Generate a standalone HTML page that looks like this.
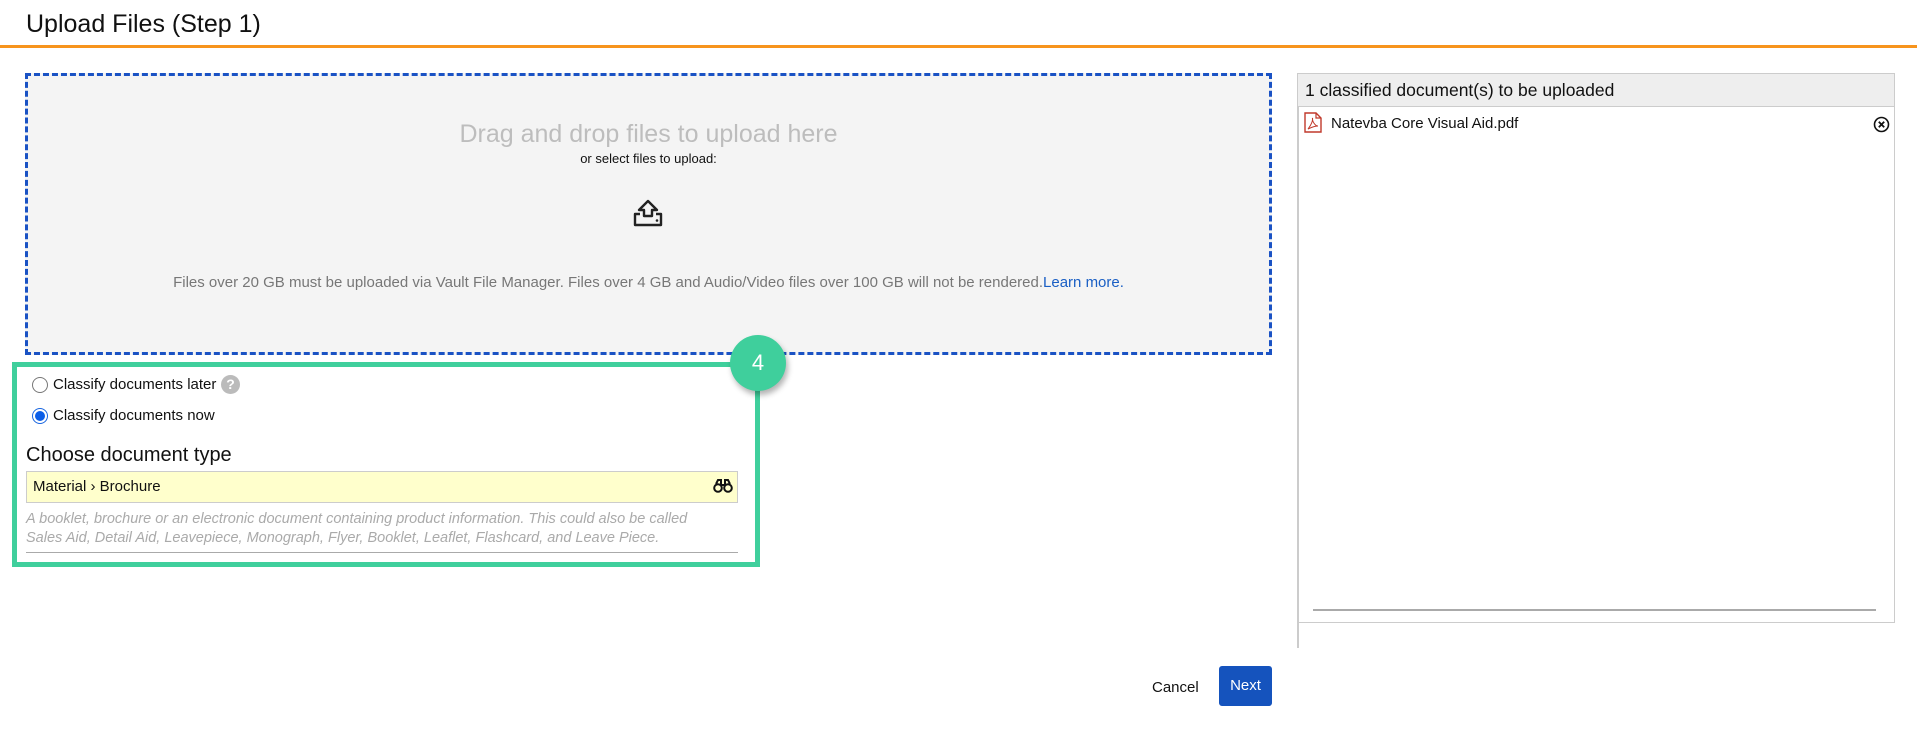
<!DOCTYPE html>
<html><head><meta charset="utf-8"><style>
*{box-sizing:border-box;margin:0;padding:0}
body{width:1917px;height:736px;background:#fff;font-family:"Liberation Sans",Arial,sans-serif;position:relative;overflow:hidden;color:#222}
.a{position:absolute;white-space:nowrap}
</style></head><body>
<div class="a" style="left:26px;top:10px;font-size:25px;color:#111">Upload Files (Step 1)</div>
<div class="a" style="left:0;top:45px;width:1917px;height:3px;background:#f7941d"></div>

<div class="a" style="left:25px;top:73px;width:1247px;height:282px;background:#f4f4f4;border:3px dashed #1a52c4"></div>
<div class="a" style="left:0;width:1297px;top:120px;text-align:center;font-size:25px;color:#bdbdbd">Drag and drop files to upload here</div>
<div class="a" style="left:0;width:1297px;top:151px;text-align:center;font-size:13px;color:#111">or select files to upload:</div>
<svg class="a" style="left:632px;top:199px" width="32" height="29" viewBox="0 0 32 29"><path d="M16 2 L7 11 H12 V17 H20 V11 H25 Z" fill="none" stroke="#222" stroke-width="2.4" stroke-linejoin="round"/><path d="M8 15 H3 V26 H29 V15 H24" fill="none" stroke="#222" stroke-width="2.4" stroke-linejoin="round"/><circle cx="25" cy="21.5" r="1.3" fill="#222"/></svg>
<div class="a" style="left:0;width:1297px;top:274px;text-align:center;font-size:15px;color:#777">Files over 20 GB must be uploaded via Vault File Manager. Files over 4 GB and Audio/Video files over 100 GB will not be rendered.<span style="color:#1a5fc4">Learn more.</span></div>

<div class="a" style="left:1297px;top:73px;width:598px;height:550px;border:1px solid #ccc;border-left:2px solid #ccc"></div>
<div class="a" style="left:1297px;top:623px;width:2px;height:25px;background:#ccc"></div>
<div class="a" style="left:1298px;top:74px;width:596px;height:33px;background:#eee;border-bottom:1px solid #ccc"></div>
<div class="a" style="left:1305px;top:80px;font-size:17.5px;color:#111">1 classified document(s) to be uploaded</div>
<svg class="a" style="left:1304px;top:112px" width="18" height="21" viewBox="0 0 18 21"><path d="M1 1 H12 L17 6 V20 H1 Z" fill="#fff" stroke="#c0392b" stroke-width="1.4"/><path d="M12 1 V6 H17" fill="none" stroke="#c0392b" stroke-width="1.2"/><path d="M4 17 C7 13 9 9 8.5 6 C8 9 11 14 14 14 C10 14 6 16 4 17Z" fill="none" stroke="#c0392b" stroke-width="1"/></svg>
<div class="a" style="left:1331px;top:115px;font-size:15px;color:#111">Natevba Core Visual Aid.pdf</div>
<svg class="a" style="left:1873px;top:116px" width="17" height="17" viewBox="0 0 17 17"><circle cx="8.5" cy="8.5" r="7" fill="none" stroke="#111" stroke-width="1.6"/><path d="M5.8 5.8 L11.2 11.2 M11.2 5.8 L5.8 11.2" stroke="#111" stroke-width="1.8"/></svg>
<div class="a" style="left:1313px;top:609px;width:563px;height:2px;background:#aaa"></div>

<div class="a" style="left:12px;top:362px;width:748px;height:205px;border:5px solid #3fcf9c"></div>
<div class="a" style="left:730px;top:335px;width:56px;height:56px;border-radius:50%;background:#3fcf9c;box-shadow:2px 4px 6px rgba(0,0,0,.3);color:#fff;font-size:22px;text-align:center;line-height:56px">4</div>
<div class="a" style="left:32px;top:377px;width:16px;height:16px;border-radius:50%;border:1px solid #777;background:#fff"></div>
<div class="a" style="left:53px;top:376px;font-size:15px;color:#111">Classify documents later</div>
<div class="a" style="left:221px;top:375px;width:19px;height:19px;border-radius:50%;background:#bbb;color:#fff;font-size:14px;font-weight:bold;text-align:center;line-height:19px">?</div>
<div class="a" style="left:32px;top:408px;width:16px;height:16px;border-radius:50%;border:1px solid #1a66e0;background:#fff"></div>
<div class="a" style="left:35px;top:411px;width:10px;height:10px;border-radius:50%;background:#0b5ee8"></div>
<div class="a" style="left:53px;top:407px;font-size:15px;color:#111">Classify documents now</div>
<div class="a" style="left:26px;top:444px;font-size:20px;color:#111">Choose document type</div>
<div class="a" style="left:26px;top:471px;width:712px;height:32px;background:#ffffcc;border:1px solid #ccc"></div>
<div class="a" style="left:33px;top:478px;font-size:15px;color:#111">Material › Brochure</div>
<svg class="a" style="left:713px;top:479px" width="20" height="14" viewBox="0 0 20 14"><circle cx="5" cy="9" r="3.8" fill="none" stroke="#111" stroke-width="2"/><circle cx="15" cy="9" r="3.8" fill="none" stroke="#111" stroke-width="2"/><path d="M3 5 L5 1 H8 V6 M17 5 L15 1 H12 V6 M8 6 H12" fill="none" stroke="#111" stroke-width="2"/></svg>
<div class="a" style="left:26px;top:510px;font-size:14.5px;font-style:italic;color:#aaa;line-height:19px;white-space:normal;width:690px">A booklet, brochure or an electronic document containing product information. This could also be called Sales Aid, Detail Aid, Leavepiece, Monograph, Flyer, Booklet, Leaflet, Flashcard, and Leave Piece.</div>
<div class="a" style="left:26px;top:552px;width:712px;height:1px;background:#aaa"></div>

<div class="a" style="left:1152px;top:679px;font-size:15px;color:#111">Cancel</div>
<div class="a" style="left:1219px;top:666px;width:53px;height:40px;background:#1553bd;border-radius:3px;color:#fff;font-size:15px;text-align:center;line-height:40px">Next</div>
</body></html>
